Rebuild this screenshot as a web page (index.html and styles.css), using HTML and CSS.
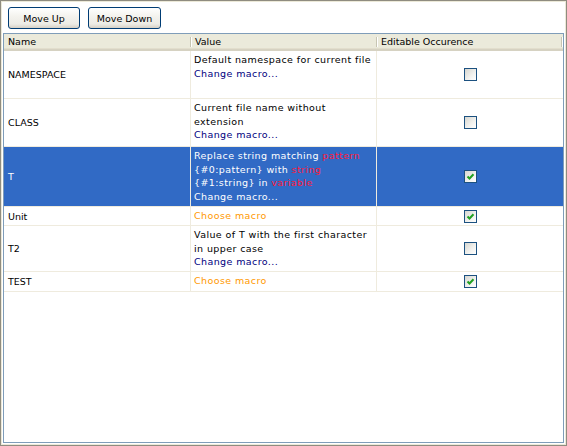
FILE: index.html
```html
<!DOCTYPE html>
<html>
<head>
<meta charset="utf-8">
<link rel="stylesheet" href="styles.css">
</head>
<body>
<div class="frame">
  <div class="inner">
    <div class="toolbar">
      <button class="btn btn-up">Move Up</button>
      <button class="btn btn-down">Move Down</button>
    </div>
    <div class="grid">
      <div class="head">
        <div class="hcell sep">Name</div>
        <div class="hcell sep">Value</div>
        <div class="hcell sep">Editable Occurence</div>
      </div>
      <div class="row r-ns">
        <div class="cell name">NAMESPACE</div>
        <div class="cell value"><span class="txt">Default namespace for current file</span><span class="link">Change macro...</span></div>
        <div class="cell check"><span class="cb"></span></div>
      </div>
      <div class="row r-class">
        <div class="cell name">CLASS</div>
        <div class="cell value"><span class="txt">Current file name without extension</span><span class="link">Change macro...</span></div>
        <div class="cell check"><span class="cb"></span></div>
      </div>
      <div class="row r-t selected">
        <div class="cell name">T</div>
        <div class="cell value"><span class="txt">Replace string matching <em>pattern</em> {#0:pattern} with <em>string</em> {#1:string} in <em>variable</em></span><span class="link">Change macro...</span></div>
        <div class="cell check"><span class="cb on"><svg viewBox="0 0 11 11" width="11" height="11"><path d="M2.5 5.5 L4.5 7.5 L8.5 3.2" fill="none" stroke="#21a121" stroke-width="2"/></svg></span></div>
      </div>
      <div class="row r-unit">
        <div class="cell name">Unit</div>
        <div class="cell value"><span class="choose">Choose macro</span></div>
        <div class="cell check"><span class="cb on"><svg viewBox="0 0 11 11" width="11" height="11"><path d="M2.5 5.5 L4.5 7.5 L8.5 3.2" fill="none" stroke="#21a121" stroke-width="2"/></svg></span></div>
      </div>
      <div class="row r-t2">
        <div class="cell name">T2</div>
        <div class="cell value"><span class="txt">Value of T with the first character in upper case</span><span class="link">Change macro...</span></div>
        <div class="cell check"><span class="cb"></span></div>
      </div>
      <div class="row r-test">
        <div class="cell name">TEST</div>
        <div class="cell value"><span class="choose">Choose macro</span></div>
        <div class="cell check"><span class="cb on"><svg viewBox="0 0 11 11" width="11" height="11"><path d="M2.5 5.5 L4.5 7.5 L8.5 3.2" fill="none" stroke="#21a121" stroke-width="2"/></svg></span></div>
      </div>
    </div>
  </div>
</div>
</body>
</html>
```

FILE: styles.css
```css
* { box-sizing: border-box; }
html, body { margin: 0; padding: 0; }
body {
  width: 567px;
  height: 446px;
  font-family: "DejaVu Sans", Verdana, sans-serif;
  font-size: 9.5px;
  color: #000;
  background: #fff;
}
.frame {
  width: 567px;
  height: 446px;
  border: 1px solid #8f8c80;
}
.inner {
  height: 100%;
  border: 1px solid #ece9d8;
  background: #fff;
  display: flex;
  flex-direction: column;
  padding: 0 1px 1px 1px;
}
.toolbar {
  height: 31px;
  display: flex;
  align-items: flex-start;
  gap: 8px;
  padding: 5px 0 0 5px;
}
.btn {
  height: 22px;
  margin: 0;
  padding: 0;
  border: 1px solid #003c74;
  border-radius: 3px;
  background: linear-gradient(#ffffff 0%, #f4f3ee 40%, #ecebe5 80%, #d6d0c5 100%);
  font-family: "DejaVu Sans", Verdana, sans-serif;
  font-size: 9.5px;
  font-weight: normal;
  color: #000;
}
.btn-up { width: 72px; }
.btn-down { width: 73px; }
.grid {
  flex: 1;
  border: 1px solid #7f9db9;
  background: #fff;
}
.head {
  display: grid;
  grid-template-columns: 187px 186px 186px;
  height: 17px;
  background: #ebeadb;
  border-bottom: 2px solid #d6d2c2;
  box-shadow: inset 0 -1px 0 #e2decd;
}
.hcell {
  position: relative;
  padding: 1px 0 0 4px;
  line-height: 14px;
  white-space: nowrap;
}
.hcell.sep::after {
  content: "";
  position: absolute;
  right: 0;
  top: 3px;
  height: 10px;
  width: 1px;
  background: #c7c5b2;
  box-shadow: 1px 0 0 #fff;
}
.hcell.sep:last-child::after { right: 1px; }
.row {
  display: grid;
  grid-template-columns: 187px 186px 186px;
  border-bottom: 1px solid #efebde;
}
.cell {
  border-right: 1px solid #efebde;
}
.cell:last-child { border-right: none; }
.name {
  display: flex;
  align-items: center;
  padding-left: 4px;
}
.value {
  padding: 2px 0 0 3px;
  line-height: 13.5px;
  letter-spacing: 0.4px;
}
.value .txt, .value .link, .value .choose { display: block; }
.value em { font-style: normal; color: #ee1133; }
.link { color: #000080; }
.choose { color: #ff9900; }
.check {
  display: flex;
  align-items: center;
  justify-content: center;
}
.cb {
  width: 13px;
  height: 13px;
  border: 1px solid #1c5180;
  background: linear-gradient(135deg, #d6d6d0 0%, #f2f2ef 60%, #ffffff 100%);
  display: block;
}
.cb svg { display: block; }
.r-ns { height: 48px; }
.r-class { height: 48px; }
.r-t { height: 60px; }
.r-unit { height: 19px; }
.r-t2 { height: 46px; }
.r-test { height: 20px; }
.selected { background: #316ac5; color: #fff; }
.selected .link { color: #fff; }
.selected .value em { color: #ff1a3a; }
```
